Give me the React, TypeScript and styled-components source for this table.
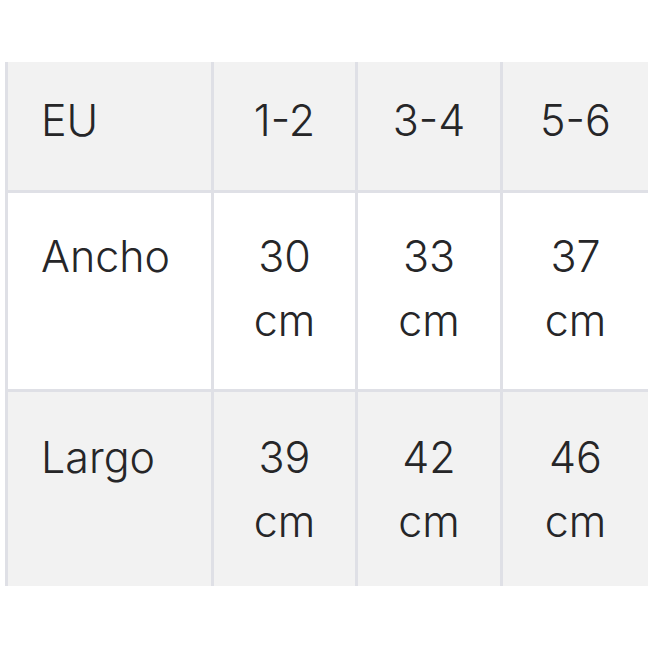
import styled, { createGlobalStyle } from 'styled-components';

const GlobalStyle = createGlobalStyle`
  body {
    margin: 0;
    background: #ffffff;
  }
`;

const Page = styled.div`
  width: 648px;
  height: 648px;
  overflow: hidden;
  padding: 62px 0 0 5px;
  box-sizing: border-box;
`;

const Grid = styled.div`
  display: grid;
  grid-template-columns: 203px 141px 142px 1fr;
  grid-template-rows: 128px 196px 194px;
  gap: 3px;
  padding-left: 3px;
  background-color: #dfe0e6;
  width: 643px;
  box-sizing: border-box;
`;

const Cell = styled.div<{ $shade?: boolean; $label?: boolean; $top: number }>`
  display: flex;
  align-items: flex-start;
  justify-content: ${(p) => (p.$label ? 'flex-start' : 'center')};
  padding: ${(p) => p.$top}px 0 0 ${(p) => (p.$label ? '33px' : '0')};
  background-color: ${(p) => (p.$shade ? '#f2f2f2' : '#ffffff')};
  font-family: Inter, 'Open Sans', sans-serif;
  font-weight: 300;
  font-size: 43px;
  line-height: 64px;
  color: #262628;
  text-align: center;
`;

const rows = [
  { label: 'EU', values: ['1-2', '3-4', '5-6'], shade: true, unit: false, top: 26 },
  { label: 'Ancho', values: ['30', '33', '37'], shade: false, unit: true, top: 31 },
  { label: 'Largo', values: ['39', '42', '46'], shade: true, unit: true, top: 33 },
];

export default function App() {
  return (
    <>
      <GlobalStyle />
      <Page>
        <Grid>
          {rows.map((r) => [
            <Cell key={r.label} $shade={r.shade} $top={r.top} $label>
              {r.label}
            </Cell>,
            ...r.values.map((v) => (
              <Cell key={r.label + v} $shade={r.shade} $top={r.top}>
                <div>
                  {v}
                  {r.unit && (
                    <>
                      <br />
                      cm
                    </>
                  )}
                </div>
              </Cell>
            )),
          ])}
        </Grid>
      </Page>
    </>
  );
}
